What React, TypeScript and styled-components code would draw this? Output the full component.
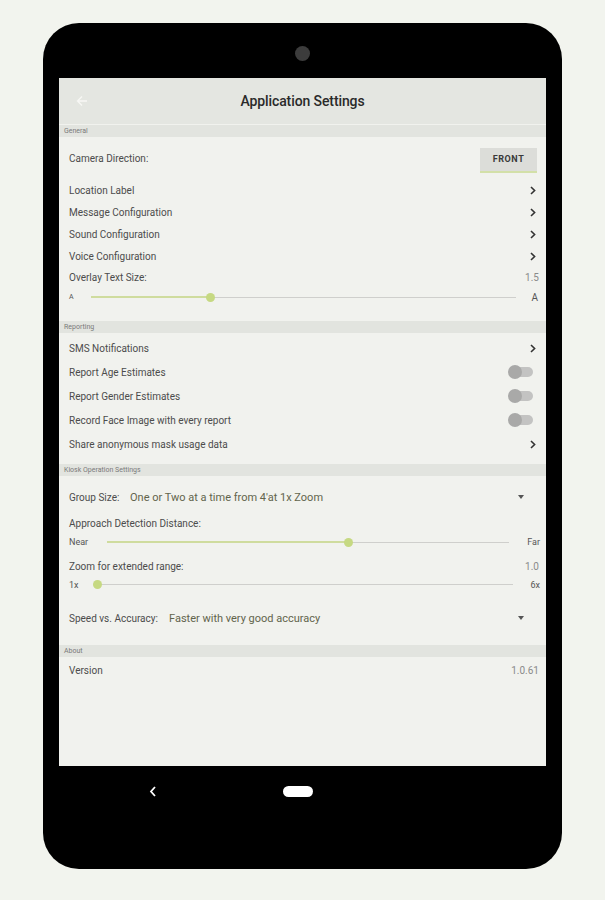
import React from "react";
import styled, { createGlobalStyle } from "styled-components";

const GlobalStyle = createGlobalStyle`
  html, body { margin: 0; padding: 0; background: #f2f4ee; }
  body { font-family: Roboto, "Noto Sans", "Liberation Sans", sans-serif; }
  * { box-sizing: border-box; }
`;

const Page = styled.div`
  width: 605px;
  height: 900px;
  padding: 23px 0 0 43px;
  background: #f2f4ee;
`;

const Tablet = styled.div`
  width: 519px;
  height: 846px;
  background: #000;
  border-radius: 36px;
  padding: 0 16px;
  display: flex;
  flex-direction: column;
`;

const TopBezel = styled.div`
  height: 55px;
  display: flex;
  align-items: center;
  justify-content: center;
  padding-top: 6px;
`;

const Camera = styled.div`
  width: 15px;
  height: 15px;
  border-radius: 50%;
  background: #3c3c3c;
`;

const Screen = styled.div`
  height: 688px;
  background: #f1f2ee;
  display: flex;
  flex-direction: column;
`;

const AppBar = styled.div`
  height: 46px;
  background: #e4e6e1;
  display: flex;
  align-items: center;
  justify-content: center;
  position: relative;
`;

const BackButton = styled.div`
  position: absolute;
  left: 17px;
  top: 17px;
  display: flex;
`;

const Title = styled.div`
  font-size: 14px;
  font-weight: 500;
  color: #2a2a2a;
  letter-spacing: -0.1px;
`;

const SectionHeader = styled.div<{ $gap?: number }>`
  height: 12px;
  margin-top: ${(p) => p.$gap ?? 0}px;
  background: #e2e4df;
  font-size: 7px;
  color: #7a7a7a;
  padding-left: 5px;
  display: flex;
  align-items: center;
`;

const Section = styled.div<{ $pt?: number; $pb?: number }>`
  display: flex;
  flex-direction: column;
  padding: ${(p) => p.$pt ?? 0}px 6px ${(p) => p.$pb ?? 0}px 10px;
`;

const Row = styled.div<{ $h: number }>`
  height: ${(p) => p.$h}px;
  display: flex;
  align-items: center;
  justify-content: space-between;
  font-size: 10px;
  color: #4c4c4c;
`;

const Label = styled.span`
  font-size: 10px;
  color: #4c4c4c;
`;

const Value = styled.span`
  font-size: 10px;
  color: #8a8a8a;
  padding-right: 1px;
`;

const FrontButton = styled.div`
  width: 57px;
  height: 25px;
  background: #dcddd9;
  border-bottom: 2px solid #d3e0a8;
  display: flex;
  align-items: center;
  justify-content: center;
  font-size: 9px;
  font-weight: 700;
  letter-spacing: 0.6px;
  color: #3a3a3a;
  margin-right: 3px;
  margin-top: 4px;
`;

const ChevronBox = styled.span`
  width: 12px;
  display: flex;
  justify-content: center;
  margin-right: 1px;
`;

const Chevron = () => (
  <ChevronBox>
    <svg width="6" height="9" viewBox="0 0 6 9">
      <path d="M1 1 L4.6 4.5 L1 8" fill="none" stroke="#333" strokeWidth="1.6" />
    </svg>
  </ChevronBox>
);

const ToggleTrack = styled.div`
  width: 24px;
  height: 10px;
  border-radius: 5px;
  background: #c3c3c2;
  position: relative;
  margin-right: 7px;
`;

const ToggleThumb = styled.div`
  position: absolute;
  left: -1px;
  top: -2px;
  width: 14px;
  height: 14px;
  border-radius: 50%;
  background: #a9a9a8;
`;

const Toggle = () => (
  <ToggleTrack>
    <ToggleThumb />
  </ToggleTrack>
);

const SliderRow = styled.div<{ $h: number }>`
  height: ${(p) => p.$h}px;
  display: flex;
  align-items: center;
`;

const SliderEnd = styled.span<{ $size: number; $w: number; $align: string; $pr?: number }>`
  font-size: ${(p) => p.$size}px;
  color: #555;
  width: ${(p) => p.$w}px;
  text-align: ${(p) => p.$align};
  padding-right: ${(p) => p.$pr ?? 0}px;
`;

const Track = styled.div`
  flex: 1;
  height: 1px;
  background: #cfcfcc;
  position: relative;
`;

const Fill = styled.div`
  position: absolute;
  left: 0;
  top: -0.5px;
  height: 2px;
  background: #cfdc9e;
`;

const Thumb = styled.div`
  position: absolute;
  top: -4px;
  width: 9px;
  height: 9px;
  margin-left: -4.5px;
  border-radius: 50%;
  background: #c6d982;
`;

const Slider = ({ value }: { value: number }) => (
  <Track>
    <Fill style={{ width: `${value * 100}%` }} />
    <Thumb style={{ left: `${value * 100}%` }} />
  </Track>
);

const DropRow = styled.div<{ $h: number }>`
  height: ${(p) => p.$h}px;
  display: flex;
  align-items: center;
`;

const DropLabel = styled.span<{ $w: number }>`
  font-size: 10px;
  color: #4c4c4c;
  width: ${(p) => p.$w}px;
`;

const DropValue = styled.span`
  flex: 1;
  font-size: 11px;
  color: #62644c;
`;

const Caret = styled.span`
  width: 0;
  height: 0;
  border-left: 3px solid transparent;
  border-right: 3px solid transparent;
  border-top: 4px solid #555;
  margin-right: 16px;
`;

const Spacer = styled.div`
  flex: 1;
`;

const NavBar = styled.div`
  height: 50px;
  display: flex;
  align-items: center;
  padding-left: 90px;
  gap: 126px;
`;

const HomePill = styled.div`
  width: 30px;
  height: 11px;
  border-radius: 6px;
  background: #fff;
`;

export default function App() {
  return (
    <>
      <GlobalStyle />
      <Page>
        <Tablet>
          <TopBezel>
            <Camera />
          </TopBezel>
          <Screen>
            <AppBar>
              <BackButton>
                <svg width="12" height="12" viewBox="0 0 12 12">
                  <path d="M11 6 H1.5 M6 1.5 L1.5 6 L6 10.5" fill="none" stroke="#f7f7f5" strokeWidth="1.3" />
                </svg>
              </BackButton>
              <Title>Application Settings</Title>
            </AppBar>
            <SectionHeader $gap={1}>General</SectionHeader>
            <Section>
              <Row $h={42}>
                <Label>Camera Direction:</Label>
                <FrontButton>FRONT</FrontButton>
              </Row>
              <Row $h={22}>
                <Label>Location Label</Label>
                <Chevron />
              </Row>
              <Row $h={22}>
                <Label>Message Configuration</Label>
                <Chevron />
              </Row>
              <Row $h={22}>
                <Label>Sound Configuration</Label>
                <Chevron />
              </Row>
              <Row $h={22}>
                <Label>Voice Configuration</Label>
                <Chevron />
              </Row>
              <Row $h={21}>
                <Label>Overlay Text Size:</Label>
                <Value>1.5</Value>
              </Row>
              <SliderRow $h={18}>
                <SliderEnd $size={7} $w={22} $align="left">A</SliderEnd>
                <Slider value={0.28} />
                <SliderEnd $size={10} $w={24} $align="right" $pr={2}>A</SliderEnd>
              </SliderRow>
            </Section>
            <SectionHeader $gap={15}>Reporting</SectionHeader>
            <Section $pt={3}>
              <Row $h={24}>
                <Label>SMS Notifications</Label>
                <Chevron />
              </Row>
              <Row $h={24}>
                <Label>Report Age Estimates</Label>
                <Toggle />
              </Row>
              <Row $h={24}>
                <Label>Report Gender Estimates</Label>
                <Toggle />
              </Row>
              <Row $h={24}>
                <Label>Record Face Image with every report</Label>
                <Toggle />
              </Row>
              <Row $h={24}>
                <Label>Share anonymous mask usage data</Label>
                <Chevron />
              </Row>
            </Section>
            <SectionHeader $gap={8}>Kiosk Operation Settings</SectionHeader>
            <Section $pt={7}>
              <DropRow $h={28}>
                <DropLabel $w={61}>Group Size:</DropLabel>
                <DropValue>One or Two at a time from 4'at 1x Zoom</DropValue>
                <Caret />
              </DropRow>
              <Row $h={24}>
                <Label>Approach Detection Distance:</Label>
              </Row>
              <SliderRow $h={14}>
                <SliderEnd $size={9} $w={38} $align="left">Near</SliderEnd>
                <Slider value={0.6} />
                <SliderEnd $size={9} $w={31} $align="right">Far</SliderEnd>
              </SliderRow>
              <Row $h={34}>
                <Label>Zoom for extended range:</Label>
                <Value>1.0</Value>
              </Row>
              <SliderRow $h={3}>
                <SliderEnd $size={9} $w={26} $align="left">1x</SliderEnd>
                <Slider value={0.005} />
                <SliderEnd $size={9} $w={27} $align="right">6x</SliderEnd>
              </SliderRow>
              <DropRow $h={64}>
                <DropLabel $w={100}>Speed vs. Accuracy:</DropLabel>
                <DropValue>Faster with very good accuracy</DropValue>
                <Caret />
              </DropRow>
            </Section>
            <SectionHeader $gap={-5}>About</SectionHeader>
            <Section $pt={1}>
              <Row $h={24}>
                <Label>Version</Label>
                <Value>1.0.61</Value>
              </Row>
            </Section>
            <Spacer />
          </Screen>
          <NavBar>
            <svg width="8" height="11" viewBox="0 0 8 11">
              <path d="M6 1 L2 5.5 L6 10" fill="none" stroke="#fff" strokeWidth="1.8" />
            </svg>
            <HomePill />
          </NavBar>
        </Tablet>
      </Page>
    </>
  );
}
